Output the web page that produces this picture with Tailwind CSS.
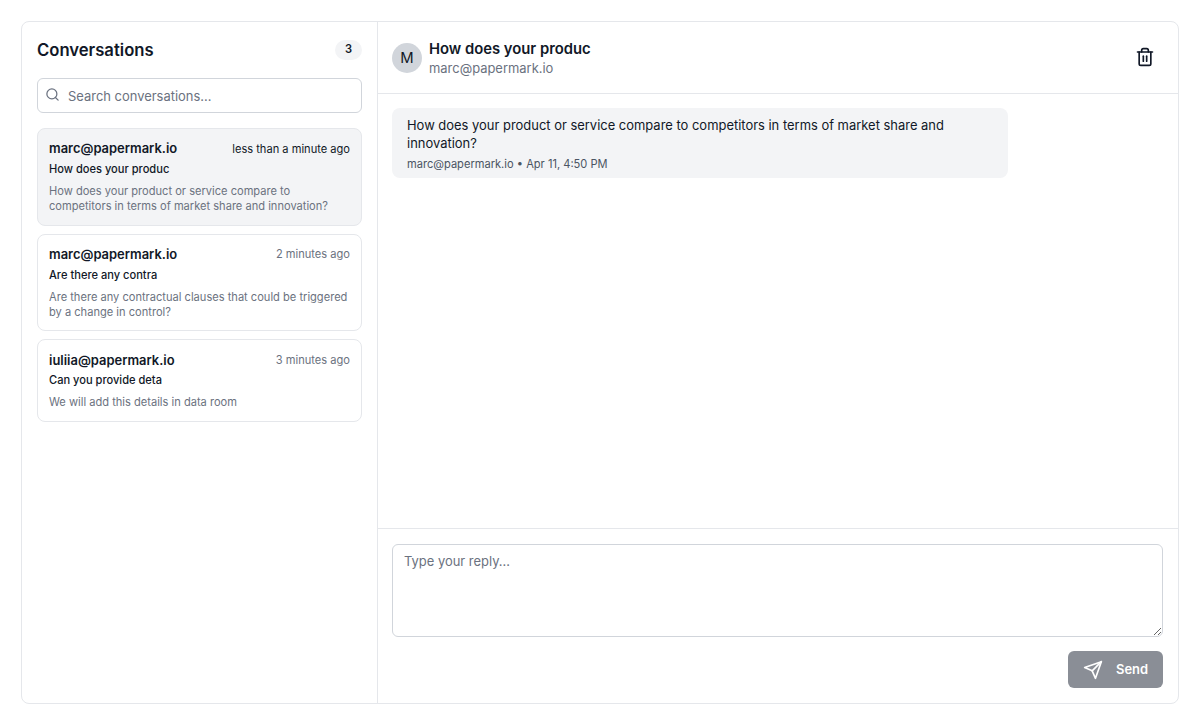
<!DOCTYPE html>
<html>
<head>
<meta charset="utf-8">
<script src="https://cdn.jsdelivr.net/npm/@tailwindcss/browser@4"></script>
</head>
<body class="bg-white font-['Inter',sans-serif] text-[#111827] antialiased overflow-hidden">
<div class="h-[717px] pt-[21px] px-[21px]">
  <div class="flex h-[683px] rounded-lg border border-[#e5e7eb] bg-white">
    <aside class="w-[356px] shrink-0 border-r border-[#e5e7eb] flex flex-col">
      <div class="pl-[15px] pr-[15px] pt-[15px]">
        <div class="flex items-center justify-between h-[25px]">
          <h2 class="text-[16.65px] leading-[26px] font-semibold">Conversations</h2>
          <span class="flex h-5 w-[27px] items-center justify-center rounded-full bg-[#f3f4f6] text-[11.1px] font-semibold">3</span>
        </div>
        <div class="mt-[16px] flex h-[35px] items-center rounded-md border border-[#d1d5db] bg-white pl-[7px] gap-[8px]">
          <svg class="w-[15px] h-[15px] text-[#6b7280] -mt-[2px]" viewBox="0 0 24 24" fill="none" stroke="currentColor" stroke-width="2" stroke-linecap="round" stroke-linejoin="round"><circle cx="11" cy="11" r="8"/><path d="m21 21-4.3-4.3"/></svg>
          <span class="text-[12.95px] text-[#6b7280] pt-[2px]">Search conversations...</span>
        </div>
      </div>
      <div class="mt-[15px] px-[15px] flex flex-col gap-2">
        <div class="h-[98px] rounded-lg border border-[#e5e7eb] bg-[#f3f4f6] px-[11px] pt-[10px]">
          <div class="flex items-center justify-between h-[20px]">
            <span class="text-[12.95px] font-semibold">marc@papermark.io</span>
            <span class="text-[11.1px]">less than a minute ago</span>
          </div>
          <p class="mt-[1px] text-[11.1px] leading-[18px] font-medium">How does your produc</p>
          <p class="mt-[6px] text-[11.1px] leading-[15px] text-[#6b7280]">How does your product or service compare to<br>competitors in terms of market share and innovation?</p>
        </div>
        <div class="h-[97px] rounded-lg border border-[#e5e7eb] bg-white px-[11px] pt-[10px]">
          <div class="flex items-center justify-between h-[20px]">
            <span class="text-[12.95px] font-semibold">marc@papermark.io</span>
            <span class="text-[11.1px] text-[#6b7280] -mt-[1px]">2 minutes ago</span>
          </div>
          <p class="mt-[1px] text-[11.1px] leading-[18px] font-medium">Are there any contra</p>
          <p class="mt-[6px] text-[11.1px] leading-[15px] text-[#6b7280]">Are there any contractual clauses that could be triggered<br>by a change in control?</p>
        </div>
        <div class="h-[83px] rounded-lg border border-[#e5e7eb] bg-white px-[11px] pt-[11px]">
          <div class="flex items-center justify-between h-[20px]">
            <span class="text-[12.95px] font-semibold">iuliia@papermark.io</span>
            <span class="text-[11.1px] text-[#6b7280] -mt-[1px]">3 minutes ago</span>
          </div>
          <p class="text-[11.1px] leading-[18px] font-medium">Can you provide deta</p>
          <p class="mt-[6px] text-[11.1px] leading-[15px] text-[#6b7280]">We will add this details in data room</p>
        </div>
      </div>
    </aside>
    <main class="flex-1 flex flex-col min-w-0">
      <header class="h-[72px] shrink-0 border-b border-[#e5e7eb] flex items-center justify-between pl-[14px] pr-[23px]">
        <div class="flex items-center gap-[7px]">
          <div class="flex h-[30px] w-[30px] items-center justify-center rounded-full bg-[#d1d5db] text-[14.8px] mt-[1px]">M</div>
          <div>
            <div class="text-[14.8px] leading-[22px] font-semibold">How does your produc</div>
            <div class="text-[12.95px] leading-[18px] text-[#6b7280] -mt-[1px]">marc@papermark.io</div>
          </div>
        </div>
        <svg class="w-[20px] h-[20px] -mt-[1px]" viewBox="0 0 24 24" fill="none" stroke="currentColor" stroke-width="2" stroke-linecap="round" stroke-linejoin="round"><path d="M3 6h18"/><path d="M19 6v14a2 2 0 0 1-2 2H7a2 2 0 0 1-2-2V6"/><path d="M8 6V4a2 2 0 0 1 2-2h4a2 2 0 0 1 2 2v2"/><path d="M10 11v6"/><path d="M14 11v6"/></svg>
      </header>
      <section class="flex-1 pl-[14px] pr-[15px] pt-[14px]">
        <div class="w-[616px] h-[70px] rounded-lg bg-[#f3f4f6] px-[15px] pt-[8px]">
          <p class="text-[12.95px] leading-[18px]">How does your product or service compare to competitors in terms of market share and innovation?</p>
          <p class="text-[11.1px] leading-[16px] mt-[4px] text-[#4b5563]">marc@papermark.io • Apr 11, 4:50 PM</p>
        </div>
      </section>
      <footer class="h-[175px] shrink-0 border-t border-[#e5e7eb] pl-[14px] pr-[15px] pt-[15px] flex flex-col">
        <textarea class="block w-full h-[93px] rounded-md border border-[#d1d5db] px-[11px] py-[7px] text-[12.95px] leading-[18px] placeholder:text-[#6b7280] outline-none" placeholder="Type your reply..."></textarea>
        <div class="mt-[14px] flex justify-end">
          <button class="flex h-[37px] w-[95px] items-center justify-center gap-[13px] rounded-md bg-[#8a8e96] text-[12.95px] font-semibold text-white">
            <svg class="w-[20px] h-[20px]" viewBox="0 0 24 24" fill="none" stroke="currentColor" stroke-width="2" stroke-linecap="round" stroke-linejoin="round"><path d="m22 2-7 20-4-9-9-4Z"/><path d="M22 2 11 13"/></svg>
            Send
          </button>
        </div>
      </footer>
    </main>
  </div>
</div>
</body>
</html>
